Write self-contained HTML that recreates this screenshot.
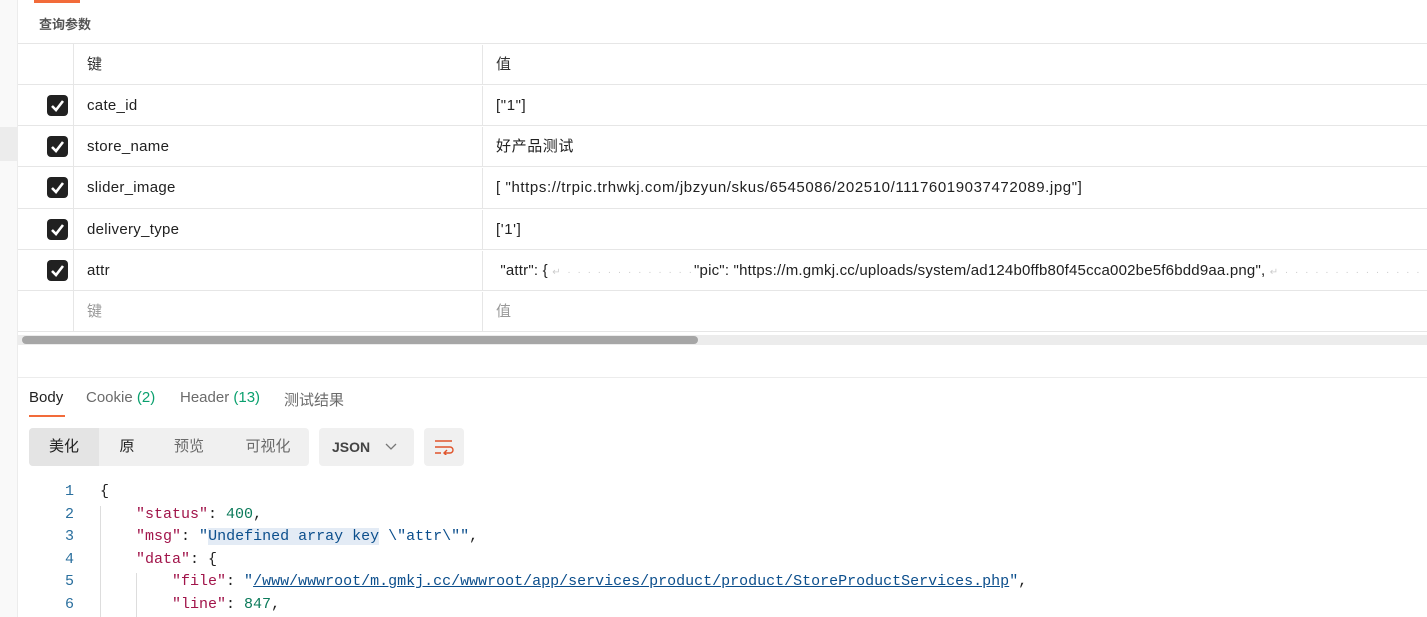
<!DOCTYPE html>
<html><head><meta charset="utf-8"><style>
*{margin:0;padding:0;box-sizing:border-box}
body{width:1427px;height:617px;overflow:hidden;background:#fff;font-family:"Liberation Sans","Noto Sans CJK SC",sans-serif;position:relative;color:#212121}
.abs{position:absolute}
.side{left:0;top:0;width:18px;height:617px;background:#f9f9f9;border-right:1px solid #ececec}
.row{position:absolute;left:18px;right:0;height:41px;border-bottom:1px solid #e6e6e6;font-size:15px}
.row .c1{position:absolute;left:0;top:0;width:56px;height:100%;border-right:1px solid #e6e6e6}
.row .c2{position:absolute;left:56px;top:1px;width:409px;height:100%;border-right:1px solid #e6e6e6;padding-left:13px;line-height:40px;letter-spacing:0.3px}
.row .c3{position:absolute;left:465px;top:1px;right:0;height:100%;padding-left:13px;line-height:40px;white-space:nowrap;overflow:hidden;letter-spacing:0.6px}
.cb{position:absolute;left:29px;top:10px;width:21px;height:21px;background:#212121;border-radius:4px}
.cb svg{position:absolute;left:3px;top:4px}
.code{font-family:"Liberation Mono",monospace;font-size:15px;white-space:pre;position:absolute;left:0}
.ln{position:absolute;width:74px;text-align:right;color:#2a6f9e;font-family:"Liberation Mono",monospace;font-size:14px}
.k{color:#a1144a}.s{color:#0b4e8c}.n{color:#0b7a5a}
</style></head><body>
<div class="abs side"></div>
<div class="abs" style="left:0;top:127px;width:18px;height:34px;background:#ececec"></div>
<div class="abs" style="left:34px;top:0;width:46px;height:3px;background:#f26b3a"></div>
<div class="abs" style="left:39px;top:14px;font-size:13px;font-weight:bold;color:#555">查询参数</div>
<div class="abs" style="left:18px;top:43px;right:0;border-top:1px solid #e6e6e6"></div>
<div class="row" style="top:44px;color:#333"><div class="c1"></div><div class="c2">键</div><div class="c3">值</div></div>
<div class="row" style="top:85px"><div class="c1"><div class="cb"><svg width="15" height="13"><path d="M2 7l4 4 7-9" stroke="#fff" stroke-width="2.6" fill="none"/></svg></div></div><div class="c2">cate_id</div><div class="c3">["1"]</div></div>
<div class="row" style="top:126px"><div class="c1"><div class="cb"><svg width="15" height="13"><path d="M2 7l4 4 7-9" stroke="#fff" stroke-width="2.6" fill="none"/></svg></div></div><div class="c2">store_name</div><div class="c3">好产品测试</div></div>
<div class="row" style="top:167px;height:42px"><div class="c1"><div class="cb"><svg width="15" height="13"><path d="M2 7l4 4 7-9" stroke="#fff" stroke-width="2.6" fill="none"/></svg></div></div><div class="c2">slider_image</div><div class="c3">[ "https://trpic.trhwkj.com/jbzyun/skus/6545086/202510/11176019037472089.jpg"]</div></div>
<div class="row" style="top:209px"><div class="c1"><div class="cb"><svg width="15" height="13"><path d="M2 7l4 4 7-9" stroke="#fff" stroke-width="2.6" fill="none"/></svg></div></div><div class="c2">delivery_type</div><div class="c3">['1']</div></div>
<div class="row" style="top:250px"><div class="c1"><div class="cb"><svg width="15" height="13"><path d="M2 7l4 4 7-9" stroke="#fff" stroke-width="2.6" fill="none"/></svg></div></div><div class="c2">attr</div><div class="c3" style="letter-spacing:0.2px">&nbsp;"attr": { <span style="color:#ccc;font-size:10px;letter-spacing:2px">↵ · · · · · · · · · · · · ·</span>"pic": "https://m.gmkj.cc/uploads/system/ad124b0ffb80f45cca002be5f6bdd9aa.png", <span style="color:#ccc;font-size:10px;letter-spacing:2px">↵ · · · · · · · · · · · · · · · · · · · ·</span></div></div>
<div class="row" style="top:291px;color:#999"><div class="c1"></div><div class="c2">键</div><div class="c3">值</div></div>
<div class="abs" style="left:18px;top:335px;right:0;height:10px;background:#ececec"></div>
<div class="abs" style="left:22px;top:336px;width:676px;height:8px;background:#a6a6a6;border-radius:4px"></div>
<div class="abs" style="left:18px;top:377px;right:0;border-top:1px solid #ececec"></div>
<div class="abs" style="left:29px;top:389px;font-size:15px;color:#212121">Body</div>
<div class="abs" style="left:29px;top:415px;width:36px;height:2px;background:#f26b3a"></div>
<div class="abs" style="left:86px;top:389px;font-size:15px;color:#6b6b6b">Cookie <span style="color:#0aa06e">(2)</span></div>
<div class="abs" style="left:180px;top:389px;font-size:15px;color:#6b6b6b">Header <span style="color:#0aa06e">(13)</span></div>
<div class="abs" style="left:284px;top:389px;font-size:15px;color:#6b6b6b">测试结果</div>
<div class="abs" style="left:29px;top:428px;width:280px;height:38px;background:#f0f0f0;border-radius:4px;font-size:15px;color:#6b6b6b">
<div class="abs" style="left:0;top:0;width:70px;height:38px;background:#e4e4e4;border-radius:4px 0 0 4px;text-align:center;line-height:38px;color:#212121">美化</div>
<div class="abs" style="left:70px;width:56px;text-align:center;line-height:38px;color:#212121">原</div>
<div class="abs" style="left:130px;width:60px;text-align:center;line-height:38px">预览</div>
<div class="abs" style="left:200px;width:78px;text-align:center;line-height:38px">可视化</div>
</div>
<div class="abs" style="left:319px;top:428px;width:95px;height:38px;background:#f0f0f0;border-radius:4px;font-size:14px;font-weight:bold;color:#444;line-height:38px;padding-left:13px">JSON<svg class="abs" style="left:66px;top:15px" width="12" height="8"><path d="M1 1l5 5 5-5" stroke="#777" stroke-width="1.3" fill="none"/></svg></div>
<div class="abs" style="left:424px;top:428px;width:40px;height:38px;background:#f0f0f0;border-radius:4px"><svg class="abs" style="left:10px;top:11px" width="20" height="16"><path d="M1 2h17M1 8h15a3 3 0 0 1 0 6h-5M13 11l-3 3 3 3M1 14h6" stroke="#e0532a" stroke-width="1.4" fill="none"/></svg></div>
<div class="ln" style="top:481px;line-height:22.5px;font-size:15px">1<br>2<br>3<br>4<br>5<br>6</div>
<div class="abs" style="left:100px;top:506px;width:1px;height:111px;background:#ddd"></div>
<div class="abs" style="left:136px;top:573px;width:1px;height:44px;background:#ddd"></div>
<div class="code" style="left:100px;top:481px;line-height:22.5px">{
    <span class="k">"status"</span>: <span class="n">400</span>,
    <span class="k">"msg"</span>: <span class="s">"<span style="background:#e3ebf5">Undefined array key</span> \"attr\""</span>,
    <span class="k">"data"</span>: {
        <span class="k">"file"</span>: <span class="s">"<u>/www/wwwroot/m.gmkj.cc/wwwroot/app/services/product/product/StoreProductServices.php</u>"</span>,
        <span class="k">"line"</span>: <span class="n">847</span>,</div>
</body></html>
